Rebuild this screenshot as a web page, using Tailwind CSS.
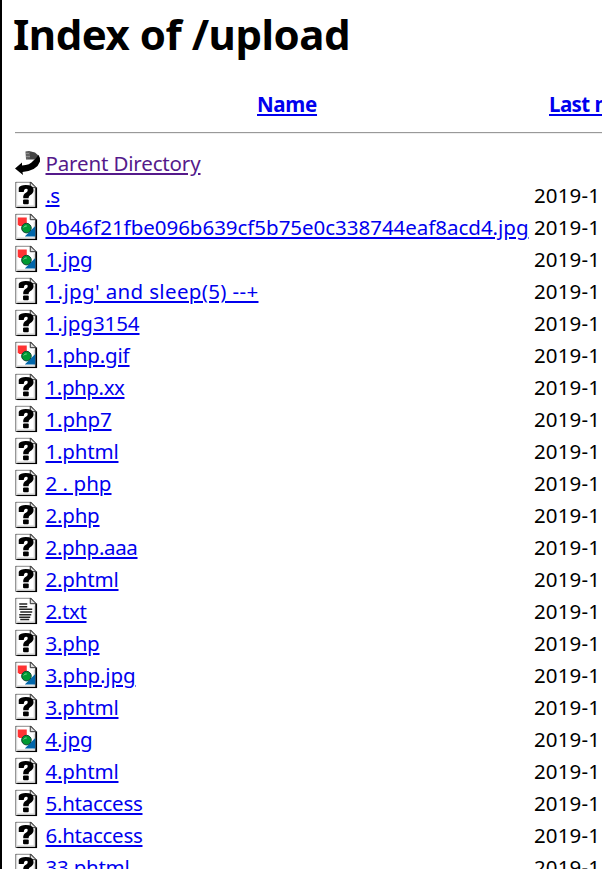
<!DOCTYPE html>
<html lang="en">
<head>
<meta charset="utf-8">
<title>Index of /upload</title>
<script src="https://cdn.jsdelivr.net/npm/@tailwindcss/browser@4"></script>
</head>
<body class="bg-white">
<svg class="hidden">
  <defs>
    <symbol id="page" viewBox="0 0 22 27">
      <path d="M.5 .5H15.500L20.500 6V26H.5Z" fill="#fff" stroke="#444" />
      <path d="M1.500 1.500V25" stroke="#ddd" />
      <path d="M2 26H21.200V6" fill="none" stroke="#000" stroke-width="1.700" />
      <path d="M15 .5V6.200H21Z" fill="#ddd" stroke="#333" />
      <path d="M19 8V24.500H2" fill="none" stroke="#ccc" />
    </symbol>
    <symbol id="unknown" viewBox="0 0 22 27">
      <use href="#page" />
      <path d="M3.500 9.800V6.300Q5 3.500 10.500 3.500Q18.300 3.500 18.300 8.500Q18.300 12 14.800 13.700Q13.300 14.500 13.300 16.800H8Q7.500 12.500 11 11Q12.500 10 12.500 8.500Q12.500 7.200 10.800 7.200Q8.900 7.200 8.500 10.500H3.500Z" fill="#000" />
      <rect x="7.800" y="18" width="5.700" height="4.700" rx="1" fill="#000" />
    </symbol>
    <symbol id="image" viewBox="0 0 22 27">
      <use href="#page" />
      <path d="M2.500 4H11.500V12.500H4L2.500 11Z" fill="#f33" />
      <path d="M20 12.500V23H9.500Z" fill="#06a" />
      <circle cx="11.200" cy="14.600" r="4.800" fill="#093" stroke="#143" />
      <path d="M8.500 14Q9.500 12 11.500 12.500" fill="none" stroke="#7d9" />
    </symbol>
    <symbol id="text" viewBox="0 0 22 27">
      <use href="#page" />
      <path d="M4 6.500H12M4 9.200H12M4 11.800H17M5 14.500H17M4 17.200H16M4 19.800H15M5 22H14" stroke="#222" stroke-width="1.500" />
    </symbol>
    <symbol id="back" viewBox="0 0 26 27">
      <path d="M10.500 2L14 1.500L20 3L24 6.500L20 10L11 10Z" fill="#444" />
      <path d="M12 2V10M14 2V9M11 4H14M11 7H15" stroke="#aaa" stroke-width=".6" />
      <path d="M0 19L7 13V16Q15 15.500 18 11.500Q21 9 23.500 5.500Q25.500 8 25 12Q22 21 7.500 22.500L8 25.500Z" fill="#000" />
    </symbol>
  </defs>
</svg>
<div class="h-[869px] w-[602px] overflow-hidden border-l-2 border-black pl-[13px] font-['Noto_Sans','Open_Sans',sans-serif] text-[20.5px] text-black">
  <h1 class="-ml-[2px] h-[90px] pt-[4px] text-[42px] leading-[60px] font-bold whitespace-nowrap"><span data-width="337" data-font="bold 42px 'Noto Sans'">Index of /upload</span></h1>
  <div class="flex h-[42px] whitespace-nowrap font-bold leading-[29px] text-[#0000ee] underline decoration-2 underline-offset-2">
    <a class="ml-[242px] w-[292px] shrink-0"><span data-width="60" data-font="bold 20.5px 'Noto Sans'">Name</span></a>
    <a class="shrink-0"><span data-width="132" data-font="bold 20.5px 'Noto Sans'">Last modified</span></a>
  </div>
  <hr class="mb-[13px] h-[2px] border-t border-b border-t-[#999] border-b-[#eee]">
  <main id="rows"></main>
</div>
<template id="row">
  <div class="flex h-8 items-center whitespace-nowrap leading-8">
    <svg class="h-[27px] w-[26px] shrink-0 -translate-y-[0.5px]"><use></use></svg>
    <a class="ml-[4.5px] w-[488.5px] shrink-0 text-[#0000ee] underline decoration-2 underline-offset-2"><span></span></a>
    <time class="shrink-0"></time>
  </div>
</template>
<script>
const files = [
  ["back", "Parent Directory", 155], ["unknown", ".s", 14],
  ["image", "0b46f21fbe096b639cf5b75e0c338744eaf8acd4.jpg", 483], ["image", "1.jpg", 47],
  ["unknown", "1.jpg' and sleep(5) --+", 213], ["unknown", "1.jpg3154", 94],
  ["image", "1.php.gif", 84], ["unknown", "1.php.xx", 79], ["unknown", "1.php7", 66],
  ["unknown", "1.phtml", 73], ["unknown", "2 . php", 66], ["unknown", "2.php", 54],
  ["unknown", "2.php.aaa", 92], ["unknown", "2.phtml", 73], ["text", "2.txt", 41],
  ["unknown", "3.php", 54], ["image", "3.php.jpg", 90], ["unknown", "3.phtml", 73],
  ["image", "4.jpg", 47], ["unknown", "4.phtml", 73], ["unknown", "5.htaccess", 97],
  ["unknown", "6.htaccess", 97], ["unknown", "33.phtml", 84]
];
const template = document.getElementById("row");
for (const [icon, name, width] of files) {
  const row = template.content.cloneNode(true);
  const use = row.querySelector("use");
  use.setAttribute("href", "#" + icon);
  use.setAttribute("width", icon === "back" ? 26 : 22.5);
  use.setAttribute("height", 27);
  const label = row.querySelector("span");
  label.textContent = name;
  label.dataset.width = width;
  if (icon === "back") row.querySelector("a").style.color = "#551a8b";
  else row.querySelector("time").innerHTML = '<span data-width="66">2019-1</span>';
  document.getElementById("rows").append(row);
}
// Tracking keeps every label at its column width.
const ruler = document.createElement("canvas").getContext("2d");
for (const label of document.querySelectorAll("[data-width]")) {
  ruler.font = label.dataset.font || "20.5px 'Noto Sans'";
  const gap = label.dataset.width - ruler.measureText(label.textContent).width;
  label.style.letterSpacing = gap / label.textContent.length + "px";
}
</script>
</body>
</html>
